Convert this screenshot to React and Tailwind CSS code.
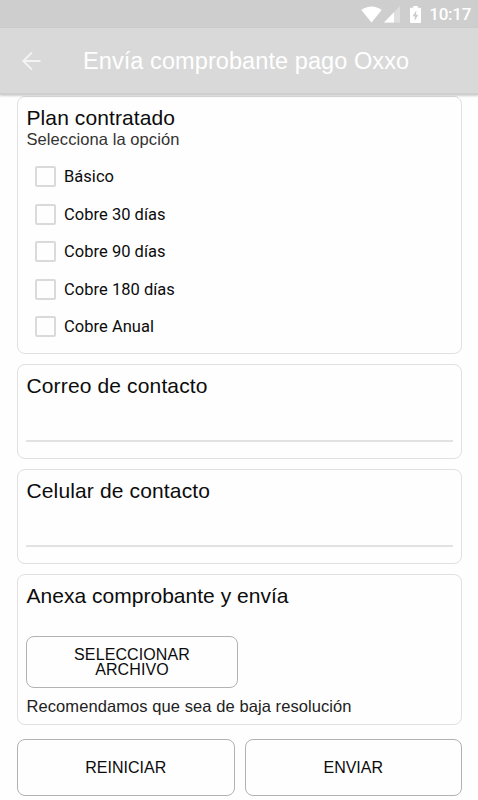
import React, { useState } from 'react';

const PLANS = ['Básico', 'Cobre 30 días', 'Cobre 90 días', 'Cobre 180 días', 'Cobre Anual'];

const StatusBar = () => (
  <div className="flex h-7 items-center justify-end bg-[#cecece] pr-[7px] text-white">
    <svg className="mr-[2px] h-[17px] w-[21px]" viewBox="0 0 21 17" fill="currentColor">
      <path d="M0.3 3.9C6.3-.8 14.7-.8 20.7 3.9L10.5 16.600Z" />
    </svg>
    <svg className="mr-[10px] h-[17px] w-[16px]" viewBox="0 0 16 17">
      <path d="M16 0V16.500H0Z" fill="#dedede" />
      <path d="M10 6.200V16.500H0Z" fill="#fff" />
    </svg>
    <svg className="mr-2 h-[17px] w-[11px]" viewBox="0 0 11 17">
      <path d="M3.200 0H7.800V1.800H10.200Q11 1.800 11 2.600V16.200Q11 17 10.200 17H0.800Q0 17 0 16.200V2.600Q0 1.800 0.800 1.800H3.200Z" fill="#fff" />
      <path d="M6.200 4.500L2.500 10.300H4.700V14.700L8.400 8.800H6.200Z" fill="#cecece" />
    </svg>
    <span className="font-['Roboto',sans-serif] text-[17px] font-medium leading-7 tracking-[-0.3px]">10:17</span>
  </div>
);

const AppBar = () => (
  <header className="relative z-10 flex h-[67px] items-center border-b-2 border-[#cfcfcf] bg-[#d9d9d9] pl-[21px] text-white shadow-[0_1px_2px_rgba(0,0,0,0.2)]">
    <button type="button" aria-label="Atrás" className="mr-[42px] text-[#f4f4f4]">
      <svg className="h-5 w-5" viewBox="0 0 20 20" fill="none" stroke="currentColor" strokeWidth="1.900">
        <path d="M19.500 10H2M11 1.300L2.300 10L11 18.700" />
      </svg>
    </button>
    <h1 className="text-[23.500px] leading-7 tracking-[0.08px]">Envía comprobante pago Oxxo</h1>
  </header>
);

const Card = ({ title, titleClassName = 'tracking-[0.14px]', className, children }) => (
  <section className={`rounded-lg border border-[#e0e0e0] px-2 ${className}`}>
    <h2 className={`pl-[0.5px] text-[21px] leading-6 ${titleClassName}`}>{title}</h2>
    {children}
  </section>
);

const TextField = ({ title, type }) => (
  <Card title={title} className="h-[95px] pt-[9px]">
    <input
      type={type}
      aria-label={title}
      className="block h-[44px] w-full border-b-2 border-[#e2e2e2] bg-transparent text-base outline-none"
    />
  </Card>
);

const App = () => {
  const [selected, setSelected] = useState([]);

  const togglePlan = (plan) => {
    setSelected(selected.includes(plan) ? selected.filter((p) => p !== plan) : [...selected, plan]);
  };

  return (
    <div className="h-[800px] overflow-hidden bg-[#fefefe] font-['Liberation_Sans',Arial,sans-serif] text-[#0c0c0c]">
      <StatusBar />
      <AppBar />
      <main className="flex flex-col gap-[10px] pl-[17px] pr-4 pt-px">
        <Card title="Plan contratado" titleClassName="tracking-[0.1px]" className="h-[258px] pt-[9px]">
          <p className="pl-[0.5px] text-[16.500px] leading-[18px] tracking-[0.08px] text-[#333]">Selecciona la opción</p>
          <div className="flex flex-col gap-[16.500px] pl-[9px] pt-[18px]">
            {PLANS.map((plan) => (
              <label key={plan} className="flex h-[21px] items-center gap-2">
                <input
                  type="checkbox"
                  checked={selected.includes(plan)}
                  onChange={() => togglePlan(plan)}
                  className="h-[21px] w-[21px] appearance-none rounded-[2px] border-2 border-[#dadada] checked:bg-[#dadada]"
                />
                <span className="pt-px font-['Roboto',sans-serif] text-[16.500px] leading-5 tracking-[0.03px]">{plan}</span>
              </label>
            ))}
          </div>
        </Card>

        <TextField title="Correo de contacto" type="email" />
        <TextField title="Celular de contacto" type="tel" />

        <Card title="Anexa comprobante y envía" titleClassName="tracking-[0.02px]" className="h-[151px] pt-[9px]">
          <button
            type="button"
            className="mt-[28px] block h-[52px] w-[212px] rounded-lg border border-[#b2b2b2] px-10 text-base leading-[15px] tracking-[0.1px]"
          >
            SELECCIONAR ARCHIVO
          </button>
          <p className="mt-2 pl-[0.5px] text-[16.500px] leading-5 tracking-[0.08px] text-[#222]">
            Recomendamos que sea de baja resolución
          </p>
        </Card>

        <div className="mt-1 flex gap-[10px]">
          <button type="button" className="h-[57px] flex-1 rounded-lg border border-[#b2b2b2] text-base">
            REINICIAR
          </button>
          <button type="button" className="h-[57px] flex-1 rounded-lg border border-[#b2b2b2] text-base">
            ENVIAR
          </button>
        </div>
      </main>
    </div>
  );
};

export default App;
